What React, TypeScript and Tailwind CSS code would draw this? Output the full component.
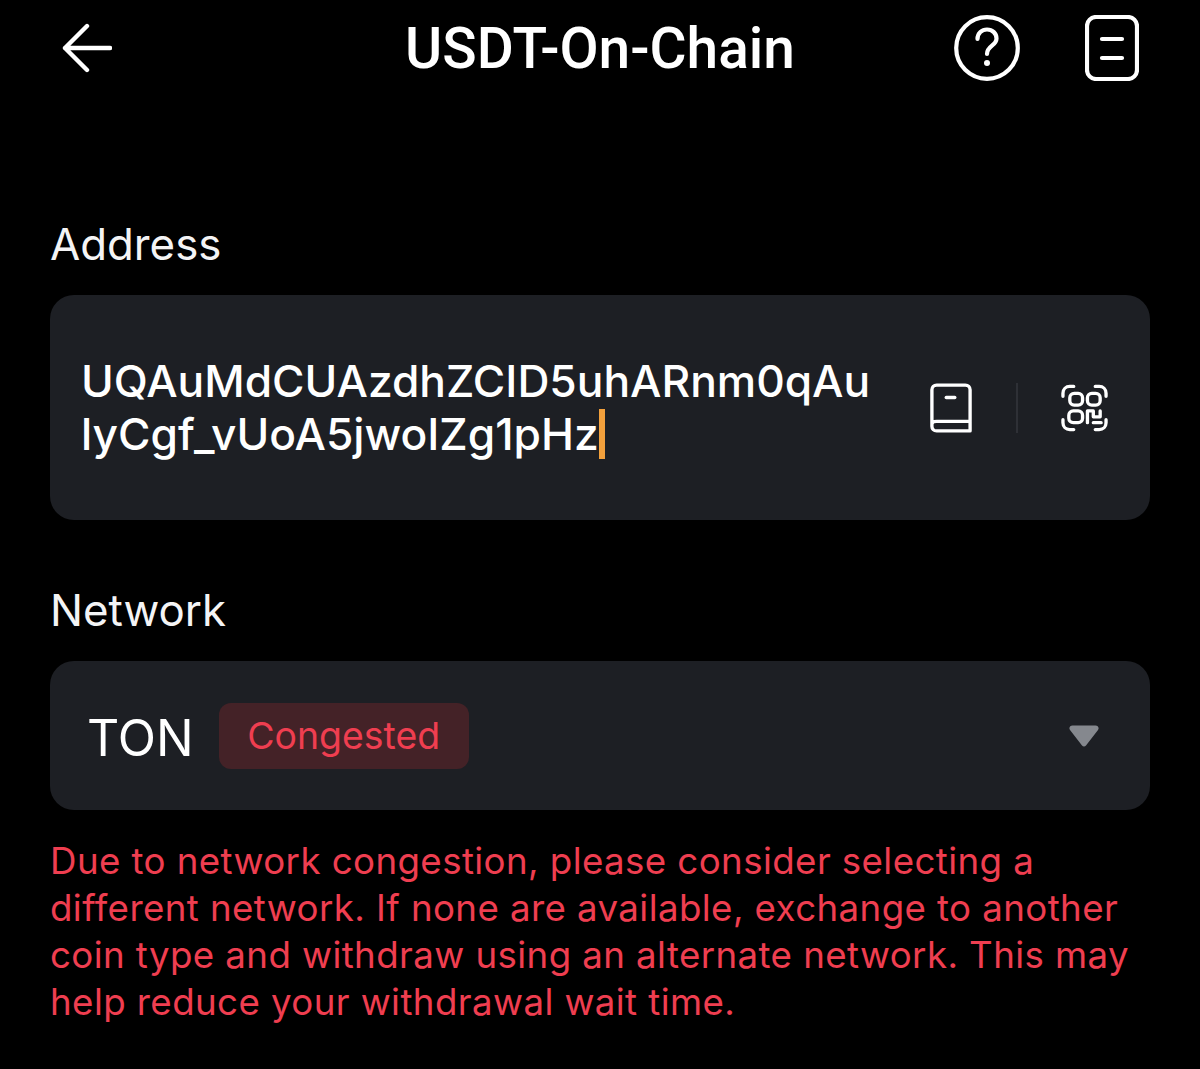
export default function App() {
  return (
    <div className="w-[1200px] h-[1069px] bg-black text-white overflow-hidden font-['Inter',sans-serif]">
      <header className="h-[96px] pl-[62px] pr-[60px] flex items-center justify-between relative">
        <svg width="50" height="50" viewBox="0 0 50 50" fill="none" stroke="white" strokeWidth="4.4" strokeLinecap="round" strokeLinejoin="round">
          <path d="M48 25H3M25 3L3 25L25 47" />
        </svg>
        <h1 className="absolute left-0 right-0 top-[1px] text-center font-['Roboto',sans-serif] font-medium text-[56.8px] leading-[96px]">USDT-On-Chain</h1>
        <div className="flex items-center gap-[65px] pr-[1px]">
          <svg width="66" height="66" viewBox="0 0 66 66" fill="none" stroke="white" strokeWidth="4.2" strokeLinecap="round">
            <circle cx="33" cy="33" r="30.8" />
            <path d="M23.5 24C23.5 18 28 14.5 33 14.5C38.5 14.5 42.5 18.5 42.5 23.5C42.5 31 33 30.5 33 39" />
            <circle cx="33" cy="48" r="3" fill="white" stroke="none" />
          </svg>
          <svg width="54" height="66" viewBox="0 0 54 66" fill="none" stroke="white" strokeWidth="4.2" strokeLinecap="round">
            <rect x="2" y="2" width="50" height="62" rx="9" />
            <path d="M17 24H37M17 43H37" />
          </svg>
        </div>
      </header>

      <main className="px-[50px] pt-[122px]">
        <label className="block text-[43.8px] leading-[54px] text-[#f4f4f5]">Address</label>
        <div className="mt-[23px] h-[225px] bg-[#1d1f24] rounded-[24px] pl-[31px] pr-[42px] flex items-center justify-between">
          <div className="w-[800px] text-[44.3px] leading-[53px] font-medium break-all">
            UQAuMdCUAzdhZCID5uhARnm0qAu
            <br />
            lyCgf_vUoA5jwoIZg1pHz
            <span className="inline-block align-[-9px] w-[6px] h-[50px] bg-[#f2a03c]" />
          </div>
          <div className="flex items-center">
            <svg width="42" height="52" viewBox="0 0 44 52" fill="none" stroke="white" strokeWidth="3.5" strokeLinecap="round" strokeLinejoin="round">
              <path d="M2 43V7C2 4 4 2 7 2H37C40 2 42 4 42 7V50H7C4 50 2 48 2 45V43C2 41 4 40 7 40H42" />
              <path d="M17 15H26" />
            </svg>
            <div className="w-[2px] h-[50px] bg-[#2e3036] ml-[44px] mr-[43px]" />
            <svg width="47" height="48" viewBox="0 0 48 48" fill="none" stroke="white" strokeWidth="3.4" strokeLinecap="round" strokeLinejoin="round">
              <path d="M2 12V9C2 5 5 2 9 2H13M35 2H39C43 2 46 5 46 9V12M2 36V39C2 43 5 46 9 46H13M35 46H39C43 46 46 43 46 39V36" />
              <rect x="9" y="9" width="13" height="12" rx="4.5" />
              <rect x="27" y="9" width="13" height="12" rx="4.5" />
              <rect x="8" y="27" width="14" height="12" rx="4.5" />
              <path d="M27 39V27H33V33H40V27M33 39H41" />
            </svg>
          </div>
        </div>

        <label className="block mt-[64px] text-[43.8px] leading-[54px] text-[#f4f4f5]">Network</label>
        <div className="mt-[23px] h-[149px] bg-[#1d1f24] rounded-[24px] pl-[37px] pr-[51px] flex items-center justify-between">
          <div className="flex items-center">
            <span className="text-[50px] leading-[60px] mt-[4px]">TON</span>
            <span className="ml-[25px] h-[66px] w-[250px] rounded-[12px] bg-[#442227] text-[#ef3e50] text-[37.4px] flex items-center justify-center mt-[1px]">Congested</span>
          </div>
          <svg width="30" height="22" viewBox="0 0 30 22" className="mt-[1px]">
            <path d="M3.5 0.5H26.5C29 0.5 30.5 3 29 5L17 20.5C16 21.8 14 21.8 13 20.5L1 5C-0.5 3 1 0.5 3.5 0.5Z" fill="#85888e" />
          </svg>
        </div>
        <p className="mt-[27px] text-[36.7px] leading-[47px] text-[#ef3e50] tracking-[0.4px]">
          Due to network congestion, please consider selecting a
          <br />
          different network. If none are available, exchange to another
          <br />
          coin type and withdraw using an alternate network. This may
          <br />
          help reduce your withdrawal wait time.
        </p>
      </main>
    </div>
  );
}
